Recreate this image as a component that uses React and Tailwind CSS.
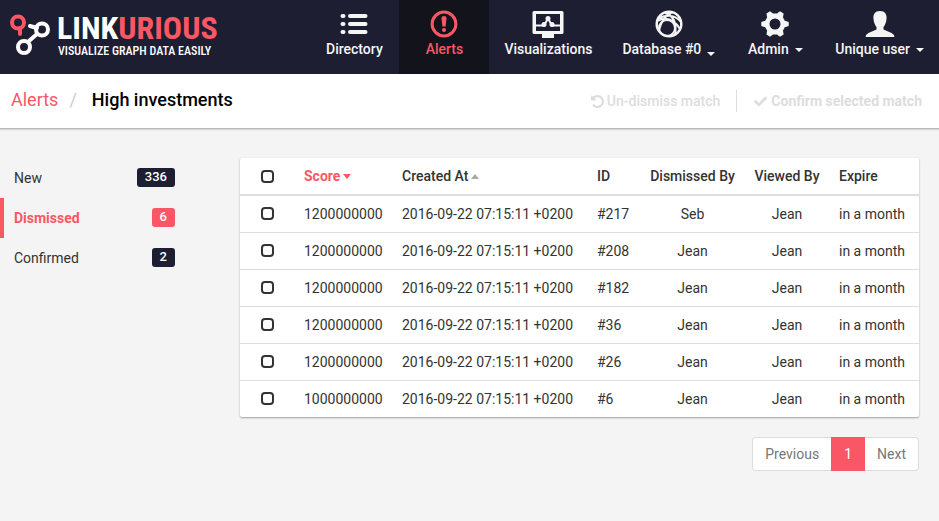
import React from "react";
import { FaCheck } from "react-icons/fa";

const UI_FONT = "font-['Roboto','Liberation_Sans',sans-serif]";

const Logo = () => (
  <a href="#home" className="flex items-center gap-[7px] self-start pt-[13px] pl-[9px] text-white">
    <svg width="41" height="44" viewBox="0 0 41 44" fill="none" className="shrink-0">
      <path d="M11 14V20" stroke="#fa5766" strokeWidth="4" strokeLinecap="round" />
      <circle cx="9" cy="8.500" r="6" stroke="#fa5766" strokeWidth="4" />
      <path d="M21 12L28 14M20 27L28 20" stroke="#fff" strokeWidth="4" strokeLinecap="round" />
      <circle cx="33" cy="15.500" r="6" stroke="#fff" strokeWidth="4" />
      <circle cx="15" cy="33" r="6" stroke="#fff" strokeWidth="4" />
    </svg>
    <span className="flex flex-col font-['Roboto_Condensed','Liberation_Sans_Narrow',sans-serif] whitespace-nowrap">
      <span className="text-[32px] leading-[30px] font-bold">
        LINK<span className="text-[#fa5766]">URIOUS</span>
      </span>
      <span className="pl-px text-[12px] leading-[16px] font-medium">VISUALIZE GRAPH DATA EASILY</span>
    </span>
  </a>
);

const ListIcon = () => (
  <svg width="28" height="28" viewBox="0 0 28 28" stroke="currentColor" strokeWidth="4" strokeLinecap="round">
    <path d="M2.500 6h1M2.500 14h1M2.500 22h1M10 6h15.500M10 14h15.500M10 22h15.500" />
  </svg>
);

const AlertIcon = () => (
  <svg width="28" height="28" viewBox="0 0 28 28" fill="currentColor">
    <circle cx="14" cy="14" r="11.900" fill="none" stroke="currentColor" strokeWidth="3" />
    <path d="M11.500 8.200Q11.500 6 14 6t2.500 2.200L15.600 16.500h-3.200z" />
    <circle cx="14" cy="20" r="2" />
  </svg>
);

const MonitorIcon = () => (
  <svg width="32" height="28" viewBox="0 0 32 28" fill="currentColor">
    <path fillRule="evenodd" d="M2 1h28q1.500 0 1.500 1.500v20q0 1.500-1.500 1.500h-8v4H10v-4H2Q.5 24 .5 22.500v-20Q.5 1 2 1zm2 3v17h24V4z" />
    <path d="M4 15.500h8l4-7 4 7h8" fill="none" stroke="currentColor" strokeWidth="2" />
    <circle cx="16" cy="8.500" r="2.500" />
    <circle cx="12" cy="14.500" r="2.500" />
    <circle cx="20" cy="14.500" r="2.500" />
  </svg>
);

const GlobeIcon = () => (
  <svg width="28" height="28" viewBox="0 0 28 28" fill="none" stroke="currentColor" strokeWidth="2">
    <circle cx="14" cy="14" r="12.300" strokeWidth="2.500" />
    <circle cx="12" cy="18" r="8" />
    <path d="M2 11Q16 4 25 19M10 3Q23 7 20 25M4 8Q18 2 26 12M18 2Q8 5 4 20" />
  </svg>
);

const GearIcon = () => (
  <svg width="28" height="28" viewBox="0 0 28 28" fill="currentColor">
    <path fillRule="evenodd" d="M5.500 3.500L9 1.300l3 2.300h4l3-2.300 3.600 2.200-.6 4 1.800 3.200 3.900 1.300v4l-3.900 1.300L22 20.500l.6 4L19 26.700l-3-2.300h-4l-3 2.300-3.500-2.200.6-4-1.900-3.200L.3 16v-4l3.900-1.300L6.100 7.500zM14 8.500a5.500 5.500 0 1 0 0 11 5.500 5.500 0 0 0 0-11z" />
  </svg>
);

const UserIcon = () => (
  <svg width="30" height="28" viewBox="0 0 30 28" fill="currentColor">
    <path d="M15 1c5 0 7 3.500 6.500 8-.3 3.500-1.500 6-3 8v2.500l8 3.500q3 1.400 3 4H.5q0-2.600 3-4l8-3.500V17c-1.500-2-2.700-4.500-3-8C8 4.500 10 1 15 1z" />
  </svg>
);

const UndoIcon = () => (
  <svg width="13" height="13" viewBox="0 128 1536 1536" fill="currentColor">
    <path d="M1536 896q0 156-61 298t-164 245-245 164-298 61q-172 0-327-72.500t-264-204.500q-7-10-6.500-22.500t8.500-20.500l137-138q10-9 25-9 16 2 23 12 73 95 179 147t225 52q104 0 198.500-40.500t163.500-109.500 109.500-163.500 40.500-198.500-40.500-198.500-109.500-163.500-163.500-109.500-198.500-40.500q-98 0-188 35.500t-160 101.500l137 138q31 30 14 69-17 40-59 40h-448q-26 0-45-19t-19-45v-448q0-42 40-59 39-17 69 14l130 129q107-101 244.500-156.500t284.500-55.500q156 0 298 61t245 164 164 245 61 298z" />
  </svg>
);

const Caret = ({ className = "" }) => (
  <span className={`inline-block border-x-4 border-t-4 border-x-transparent border-t-current ${className}`} />
);

const navItems = [
  { label: "Directory", Icon: ListIcon },
  { label: "Alerts", Icon: AlertIcon, active: true },
  { label: "Visualizations", Icon: MonitorIcon },
  { label: "Database #0", Icon: GlobeIcon, menu: true, low: true },
  { label: "Admin", Icon: GearIcon, menu: true },
  { label: "Unique user", Icon: UserIcon, menu: true },
];

function NavItem({ label, Icon, active, menu, low }) {
  const Tag = menu ? "button" : "a";
  const props = menu ? { type: "button" } : { href: "#" + label.toLowerCase() };
  return (
    <Tag
      {...props}
      className={`flex min-w-[90px] flex-col items-center gap-px px-[15px] pt-[10px] pb-[15px] text-[14px] leading-5 font-medium whitespace-nowrap ${
        active ? "bg-[#13131c] text-[#fa5766]" : "text-[#f5f5f5]"
      }`}
    >
      <Icon />
      <span className="flex items-center gap-[6px]">
        {label}
        {menu && <Caret className={low ? "mt-[10px]" : "mt-[2px]"} />}
      </span>
    </Tag>
  );
}

const filters = [
  { label: "New", count: 336 },
  { label: "Dismissed", count: 6, active: true },
  { label: "Confirmed", count: 2 },
];

const rows = [
  { score: "1200000000", id: "#217", by: "Seb" },
  { score: "1200000000", id: "#208", by: "Jean" },
  { score: "1200000000", id: "#182", by: "Jean" },
  { score: "1200000000", id: "#36", by: "Jean" },
  { score: "1200000000", id: "#26", by: "Jean" },
  { score: "1000000000", id: "#6", by: "Jean" },
];

const Check = ({ label }) => (
  <input
    type="checkbox"
    aria-label={label}
    className="mx-auto block size-[13px] appearance-none rounded-[4px] border-2 border-[#333] bg-white checked:bg-[#333]"
  />
);

export default function App() {
  return (
    <div className={`min-h-screen bg-[#f4f4f4] text-[14px] leading-5 text-[#333] ${UI_FONT}`}>
      <header className="flex justify-between bg-[#1e1e32]">
        <Logo />
        <nav className="flex">
          {navItems.map((item) => (
            <NavItem key={item.label} {...item} />
          ))}
        </nav>
      </header>

      <div className="flex h-[55px] items-center justify-between border-b border-[#bbb] bg-white pr-[17px] pl-[11px] shadow-[0_1px_1px_rgba(0,0,0,0.12)]">
        <h1 className="flex items-center pb-[2px] text-[18px] leading-6">
          <a href="#alerts" className="text-[#fa5766]">Alerts</a>
          <span className="px-[11px] text-[#ccc]">/</span>
          <span className="pl-1 font-medium text-black">High investments</span>
        </h1>
        <div className="flex items-center font-medium text-[#ddd]">
          <button type="button" disabled className="flex items-center gap-[3px] pr-4">
            <UndoIcon /> Un-dismiss match
          </button>
          <button type="button" disabled className="flex items-center gap-1 border-l border-[#ddd] py-px pl-[17px] font-bold">
            <FaCheck size={13} /> Confirm selected match
          </button>
        </div>
      </div>

      <main className="flex items-start pt-[29px] pr-5">
        <aside className="w-[175px] shrink-0">
          {filters.map(({ label, count, active }) => (
            <a
              key={label}
              href={"#" + label.toLowerCase()}
              className={`flex h-10 items-center justify-between border-l-4 pl-[10px] ${
                active ? "border-[#fa5766] font-bold text-[#fa5766]" : "border-transparent"
              }`}
            >
              {label}
              <span className="pb-[2px]">
                <span
                  className={`block rounded-[3px] px-2 pb-px text-[13px] leading-[18px] font-medium text-white ${
                    active ? "bg-[#fa5766]" : "bg-[#1e1e32]"
                  }`}
                >
                  {count}
                </span>
              </span>
            </a>
          ))}
        </aside>

        <section className="ml-[65px] min-w-0 flex-1">
          <div className="overflow-hidden rounded-[2px] bg-white shadow-[0_1px_2px_rgba(0,0,0,0.35)]">
            <table className="w-full table-fixed text-left whitespace-nowrap">
              <colgroup>
                <col className="w-[54px]" />
                <col className="w-[98px]" />
                <col className="w-[195px]" />
                <col className="w-[53px]" />
                <col className="w-[105px]" />
                <col className="w-[84px]" />
                <col className="w-[90px]" />
              </colgroup>
              <thead>
                <tr className="h-[37px] border-b-2 border-[#ddd]">
                  <th><Check label="Select all" /></th>
                  <th className="px-[10px] font-bold text-[#fa5766]">
                    <button type="button" className="flex items-center gap-[3px]">
                      Score
                      <span className="border-x-[4px] border-t-[5px] border-x-transparent border-t-current" />
                    </button>
                  </th>
                  <th className="px-[10px] font-medium">
                    <button type="button" className="flex items-center gap-[3px]">
                      Created At
                      <span className="border-x-[4px] border-b-[5px] border-x-transparent border-b-[#aaa]" />
                    </button>
                  </th>
                  <th className="px-[10px] font-medium">ID</th>
                  <th className="text-center font-medium">Dismissed By</th>
                  <th className="text-center font-medium">Viewed By</th>
                  <th className="px-[10px] font-medium">Expire</th>
                </tr>
              </thead>
              <tbody>
                {rows.map(({ score, id, by }) => (
                  <tr key={id} className="h-[37px] border-b border-[#ddd] last:border-b-0">
                    <td><Check label={"Select " + id} /></td>
                    <td className="px-[10px]">{score}</td>
                    <td className="px-[10px]">2016-09-22 07:15:11 +0200</td>
                    <td className="px-[10px]">{id}</td>
                    <td className="text-center">{by}</td>
                    <td className="text-center">Jean</td>
                    <td className="px-[10px]">in a month</td>
                  </tr>
                ))}
              </tbody>
            </table>
          </div>

          <nav className="mt-5 flex justify-end text-[#777]" aria-label="Pages">
            <button type="button" className="h-[34px] rounded-l-[4px] border border-r-0 border-[#ddd] bg-white px-3">Previous</button>
            <button type="button" className="h-[34px] bg-[#fa5766] px-[13px] text-white">1</button>
            <button type="button" className="h-[34px] rounded-r-[4px] border border-l-0 border-[#ddd] bg-white px-3">Next</button>
          </nav>
        </section>
      </main>
    </div>
  );
}
